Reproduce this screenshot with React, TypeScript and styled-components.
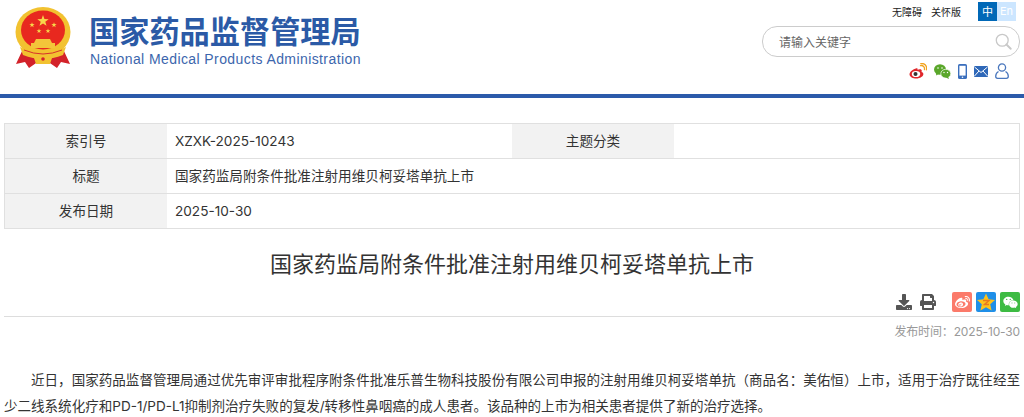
import React from 'react';
import styled, { createGlobalStyle } from 'styled-components';
import { FaWeibo, FaWeixin, FaDownload, FaPrint } from 'react-icons/fa';

const GlobalStyle = createGlobalStyle`
  html, body {
    margin: 0;
    padding: 0;
    background: #fff;
    overflow: hidden;
    font-family: Inter, "Noto Sans CJK SC", sans-serif;
    color: #333;
  }
`;

const Header = styled.header`
  height: 94px;
  border-bottom: 4px solid #2b5aaa;
  display: flex;
  justify-content: space-between;
  padding: 0 4px 0 15px;
`;

const Brand = styled.div`
  display: flex;
  align-items: flex-start;
  gap: 19px;
  padding-top: 7px;
`;

const BrandText = styled.div`
  display: flex;
  flex-direction: column;
  padding-top: 5px;
`;

const BrandName = styled.div`
  font-family: "Noto Sans CJK SC", sans-serif;
  font-size: 30.2px;
  line-height: 37px;
  font-weight: 700;
  color: #2b5aa6;
  white-space: nowrap;
  margin-left: -1px;
`;

const BrandEn = styled.div`
  font-family: "Liberation Sans", sans-serif;
  font-size: 14px;
  line-height: 16px;
  margin-top: 2px;
  color: #3c66ad;
  white-space: nowrap;
  letter-spacing: 0.41px;
`;

const HeaderRight = styled.div`
  width: 258px;
  display: flex;
  flex-direction: column;
  align-items: stretch;
`;

const TopLinks = styled.div`
  height: 20px;
  margin-top: 1px;
  display: flex;
  justify-content: flex-end;
  align-items: center;
  font-size: 10px;
  color: #222;
`;

const TopLink = styled.span`
  margin-right: 9px;
`;

const LangSwitch = styled.div`
  display: flex;
  margin-left: 8px;
  margin-right: 4px;
`;

const LangItem = styled.span<{ $active?: boolean }>`
  width: 19px;
  height: 19px;
  display: flex;
  align-items: center;
  justify-content: center;
  font-size: 11px;
  color: #fff;
  background: ${(props) => (props.$active ? '#0068b7' : '#cce6ff')};
`;

const SearchBox = styled.div`
  height: 29px;
  margin-top: 5px;
  border: 1px solid #ccc;
  border-radius: 15px;
  display: flex;
  align-items: center;
  justify-content: space-between;
  padding: 0 7px 0 16px;
  font-size: 12px;
  color: #666;
`;

const IconRow = styled.div`
  display: flex;
  justify-content: flex-end;
  align-items: center;
  gap: 7px;
  margin-top: 5px;
  padding-right: 11px;
  height: 18px;
`;

const Main = styled.main`
  padding: 25px 4px 0;
`;

const InfoTable = styled.div`
  border: 1px solid #e0e0e0;
  border-bottom: 0;
`;

const InfoRow = styled.div`
  display: grid;
  grid-template-columns: 162px 345px 162px 1fr;
  height: 34px;
  border-bottom: 1px solid #e0e0e0;
  font-size: 13.6px;
  line-height: 34px;
`;

const InfoLabel = styled.div`
  background: #f2f2f2;
  text-align: center;
`;

const InfoValue = styled.div<{ $span?: boolean }>`
  padding-left: 8px;
  ${(props) => (props.$span ? 'grid-column: 2 / 5;' : '')}
`;

const Title = styled.h1`
  margin: 20px 0 0;
  font-size: 22px;
  line-height: 30px;
  font-weight: 400;
  text-align: center;
  color: #333;
`;

const Tools = styled.div`
  margin-top: 13px;
  height: 20px;
  padding-bottom: 4px;
  border-bottom: 1px solid #ddd;
  display: flex;
  justify-content: flex-end;
  align-items: center;
  color: #555;
`;

const ToolIcon = styled.span`
  display: flex;
  margin-right: 8px;
  font-size: 16px;
`;

const ShareGroup = styled.div`
  display: flex;
  gap: 4px;
  margin-left: 8px;
`;

const ShareTile = styled.span<{ $bg: string }>`
  width: 20px;
  height: 20px;
  display: flex;
  align-items: center;
  justify-content: center;
  color: #fff;
  font-size: 15px;
  border-radius: 2px;
  background: ${(props) => props.$bg};
`;

const PubDate = styled.div`
  margin-top: 6px;
  text-align: right;
  font-size: 12px;
  line-height: 18px;
  letter-spacing: -0.15px;
  color: #999;
`;

const Body = styled.p`
  margin: 26px 0 0;
  font-size: 13.54px;
  line-height: 26px;
  text-indent: 27px;
  text-align: justify;
  color: #333;
`;

const starPath = (cx: number, cy: number, r: number) => {
  const pts: string[] = [];
  for (let i = 0; i < 10; i++) {
    const rad = i % 2 === 0 ? r : r * 0.4;
    const a = (Math.PI / 5) * i - Math.PI / 2;
    pts.push(`${(cx + rad * Math.cos(a)).toFixed(2)} ${(cy + rad * Math.sin(a)).toFixed(2)}`);
  }
  return `M${pts.join(' L')} Z`;
};

const Emblem = () => (
  <svg width="56" height="61" viewBox="0 0 56 61">
    <path d="M8 42 L1 57 L10 55 L14 61 L24 54 H32 L42 61 L46 55 L55 57 L48 42 Z" fill="#d3222a" />
    <ellipse cx="28" cy="25" rx="27.5" ry="25" fill="#f2c230" />
    <ellipse cx="28" cy="23" rx="22" ry="19.5" fill="#e8281f" />
    <path d={starPath(28, 14, 6)} fill="#f7d64a" />
    <path d={starPath(17, 18, 2.8)} fill="#f7d64a" />
    <path d={starPath(39, 18, 2.8)} fill="#f7d64a" />
    <path d={starPath(24, 24, 2.6)} fill="#f7d64a" />
    <path d={starPath(33, 24, 2.6)} fill="#f7d64a" />
    <path d="M21 32 h14 l2 4 h-18 Z M16 36 h24 v5 h-24 Z" fill="#f3c53a" />
    <path d="M5 40 Q28 52 51 40 L48 48 Q28 56 8 48 Z" fill="#f2c230" />
    <path d="M9 43 Q28 51 47 43" fill="none" stroke="#d3222a" strokeWidth="0.9" />
    <path d="M19 51 Q28 47 37 51 L35 57 H21 Z" fill="#f2c230" />
    <circle cx="28" cy="52" r="1.8" fill="#d3222a" />
  </svg>
);

const SearchIcon = () => (
  <svg width="17" height="17" viewBox="0 0 20 20" fill="none" stroke="#c8c8c8">
    <circle cx="8.5" cy="8.5" r="7" strokeWidth="1.5" />
    <path d="M13.5 13.5 L18.5 18.5" strokeWidth="2.2" strokeLinecap="round" />
  </svg>
);

const WeiboColor = () => (
  <svg width="18" height="16" viewBox="0 0 18 16">
    <path d="M7.5 5.2 C3.8 6 0.5 9 0.5 11.2 C0.5 13.9 4 15.5 7.3 15.5 C11.2 15.5 14.4 13.3 14.4 11 C14.4 9.7 13.2 9.2 12.5 9 C13.1 7.7 12.7 6.7 11.7 6.3 C10.6 6 9.2 6.5 8.5 6.8 C8.7 5.6 8.4 4.9 7.5 5.2 Z" fill="#e0262b" />
    <ellipse cx="7" cy="11" rx="4.2" ry="3.1" fill="#fff" />
    <circle cx="6.5" cy="11" r="2" fill="#333" />
    <path d="M11.5 2.6 C14 2.1 16 4 15.4 6.5 M11.8 0.6 C15.5 -0.1 18.4 3 17.4 6.8" fill="none" stroke="#f1a21d" strokeWidth="1.3" strokeLinecap="round" />
  </svg>
);

const WechatColor = () => (
  <svg width="17" height="15" viewBox="0 0 17 15">
    <ellipse cx="6" cy="5.5" rx="6" ry="5.2" fill="#5aa72a" />
    <path d="M2.5 8.5 L2 11.5 L5.5 9.5 Z" fill="#5aa72a" />
    <ellipse cx="11.8" cy="9.7" rx="5" ry="4.4" fill="#5aa72a" stroke="#fff" strokeWidth="0.7" />
    <path d="M14 12.5 L15 15 L11.8 13.5 Z" fill="#5aa72a" />
    <circle cx="4" cy="4" r="0.8" fill="#fff" />
    <circle cx="8" cy="4" r="0.8" fill="#fff" />
    <circle cx="10" cy="8.5" r="0.7" fill="#fff" />
    <circle cx="13.5" cy="8.5" r="0.7" fill="#fff" />
  </svg>
);

const PhoneIcon = () => (
  <svg width="9" height="15" viewBox="0 0 9 15">
    <rect x="0" y="0" width="9" height="15" rx="1.6" fill="#3b6fbd" />
    <rect x="1.4" y="1.8" width="6.2" height="9.8" fill="#fff" />
    <circle cx="4.5" cy="13.3" r="0.8" fill="#fff" />
  </svg>
);

const MailIcon = () => (
  <svg width="14" height="11" viewBox="0 0 14 11">
    <rect width="14" height="11" rx="1" fill="#2f68b8" />
    <path d="M0.5 1 L7 6.5 L13.5 1 M0.5 10 L5 5 M13.5 10 L9 5" fill="none" stroke="#fff" strokeWidth="1" />
  </svg>
);

const UserIcon = () => (
  <svg width="14" height="16" viewBox="0 0 14 16" fill="none" stroke="#4a77bd" strokeWidth="1.3">
    <circle cx="7" cy="4.5" r="3.6" />
    <path d="M3.5 8.5 C1.8 9.5 0.7 11 0.7 13.2 C0.7 14.6 1.5 15.3 2.6 15.3 H11.4 C12.5 15.3 13.3 14.6 13.3 13.2 C13.3 11 12.2 9.5 10.5 8.5" />
  </svg>
);

const QzoneStar = () => (
  <svg width="20" height="20" viewBox="0 0 20 20">
    <rect width="20" height="20" rx="2" fill="#1f8fe8" />
    <path d="M10 1.5 L12.6 7.3 L19 8 L14.2 12.2 L15.6 18.5 L10 15.3 L4.4 18.5 L5.8 12.2 L1 8 L7.4 7.3 Z" fill="#fcc21b" />
    <path d="M7 8.5 H13 L8.5 12.5 H13" fill="none" stroke="#e8791f" strokeWidth="1.5" />
  </svg>
);

const App: React.FC = () => {
  return (
    <>
      <GlobalStyle />
      <Header>
        <Brand>
          <Emblem />
          <BrandText>
            <BrandName>国家药品监督管理局</BrandName>
            <BrandEn>National Medical Products Administration</BrandEn>
          </BrandText>
        </Brand>
        <HeaderRight>
          <TopLinks>
            <TopLink>无障碍</TopLink>
            <TopLink>关怀版</TopLink>
            <LangSwitch>
              <LangItem $active>中</LangItem>
              <LangItem>En</LangItem>
            </LangSwitch>
          </TopLinks>
          <SearchBox>
            <span>请输入关键字</span>
            <SearchIcon />
          </SearchBox>
          <IconRow>
            <WeiboColor />
            <WechatColor />
            <PhoneIcon />
            <MailIcon />
            <UserIcon />
          </IconRow>
        </HeaderRight>
      </Header>
      <Main>
        <InfoTable>
          <InfoRow>
            <InfoLabel>索引号</InfoLabel>
            <InfoValue>XZXK-2025-10243</InfoValue>
            <InfoLabel>主题分类</InfoLabel>
            <InfoValue />
          </InfoRow>
          <InfoRow>
            <InfoLabel>标题</InfoLabel>
            <InfoValue $span>国家药监局附条件批准注射用维贝柯妥塔单抗上市</InfoValue>
          </InfoRow>
          <InfoRow>
            <InfoLabel>发布日期</InfoLabel>
            <InfoValue $span>2025-10-30</InfoValue>
          </InfoRow>
        </InfoTable>
        <Title>国家药监局附条件批准注射用维贝柯妥塔单抗上市</Title>
        <Tools>
          <ToolIcon><FaDownload /></ToolIcon>
          <ToolIcon><FaPrint /></ToolIcon>
          <ShareGroup>
            <ShareTile $bg="#fb7a6a"><FaWeibo /></ShareTile>
            <QzoneStar />
            <ShareTile $bg="#3dbb43"><FaWeixin /></ShareTile>
          </ShareGroup>
        </Tools>
        <PubDate>发布时间：2025-10-30</PubDate>
        <Body>
          近日，国家药品监督管理局通过优先审评审批程序附条件批准乐普生物科技股份有限公司申报的注射用维贝柯妥塔单抗（商品名：美佑恒）上市，适用于治疗既往经至少二线系统化疗和PD-1/PD-L1抑制剂治疗失败的复发/转移性鼻咽癌的成人患者。该品种的上市为相关患者提供了新的治疗选择。
        </Body>
      </Main>
    </>
  );
};

export default App;
